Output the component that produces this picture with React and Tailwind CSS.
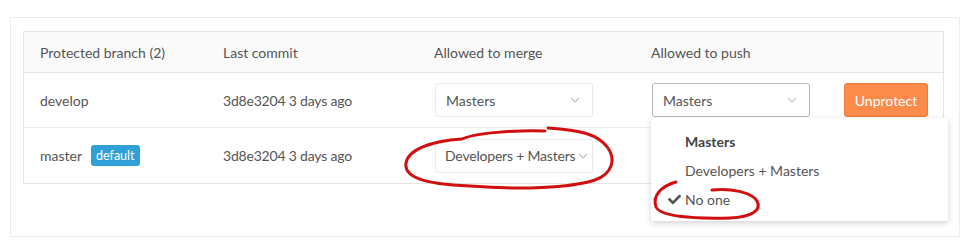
import { FaCheck } from "react-icons/fa";

function Chevron() {
  return (
    <svg width="10" height="6" viewBox="0 0 10 6" className="shrink-0">
      <path d="M1 1l4 4 4-4" fill="none" stroke="#c4c4c4" strokeWidth="1.2" />
    </svg>
  );
}

function Select({ label, focused }) {
  return (
    <div
      className={`flex items-center justify-between w-[158px] h-[34px] pl-[10px] pr-[12px] rounded-[3px] bg-white border ${
        focused ? "border-[#b8b8b8]" : "border-[#ebebeb]"
      }`}
    >
      <span className="truncate">{label}</span>
      <Chevron />
    </div>
  );
}

export default function App() {
  return (
    <div
      className="relative w-[980px] h-[240px] bg-white text-[14px] text-[#555]"
      style={{ fontFamily: '"Source Sans Pro", Lato, "Liberation Sans", sans-serif' }}
    >
      <div className="absolute left-[10px] top-[17px] w-[950px] h-[220px] border border-[#ececec] pt-[13px] pl-[12px]">
        {/* Table */}
        <div className="w-[921px] border border-[#e5e5e5]">
          {/* Header */}
          <div className="grid grid-cols-[183px_211px_217px_1fr] h-[41px] items-center bg-[#fafafa] border-b border-[#e5e5e5]">
            <div className="pl-[16px]">Protected branch (2)</div>
            <div className="pl-[16px]">Last commit</div>
            <div className="pl-[16px]">Allowed to merge</div>
            <div className="pl-[16px]">Allowed to push</div>
          </div>

          {/* develop */}
          <div className="grid grid-cols-[183px_211px_217px_1fr] h-[55px] items-center border-b border-[#eee]">
            <div className="pl-[16px]">develop</div>
            <div className="pl-[16px] tracking-[-0.2px]">3d8e3204 3 days ago</div>
            <div className="pl-[17px]">
              <Select label="Masters" />
            </div>
            <div className="pl-[17px] flex items-center gap-[34px]">
              <Select label="Masters" focused />
              <button className="h-[34px] w-[84px] rounded-[3px] bg-[#fc8a4b] border border-[#f07a38] text-white">
                Unprotect
              </button>
            </div>
          </div>

          {/* master */}
          <div className="grid grid-cols-[183px_211px_217px_1fr] h-[55px] items-center">
            <div className="pl-[16px] flex items-center gap-[9px]">
              master
              <span className="px-[5px] h-[21px] leading-[21px] rounded-[3px] bg-[#2f9fd8] text-white text-[12.5px]">
                default
              </span>
            </div>
            <div className="pl-[16px] tracking-[-0.2px]">3d8e3204 3 days ago</div>
            <div className="pl-[17px]">
              <div className="flex items-center gap-[3px] w-[158px] h-[34px] pl-[9px] rounded-[3px] bg-white border border-[#ebebeb] whitespace-nowrap overflow-hidden">
                <span className="tracking-[-0.2px]">Developers + Masters</span>
                <Chevron />
              </div>
            </div>
            <div />
          </div>
        </div>
      </div>

      {/* Dropdown menu */}
      <div className="absolute left-[651px] top-[118px] w-[297px] h-[103px] bg-white rounded-[2px] shadow-[0_2px_6px_rgba(0,0,0,0.18)] pt-[10px]">
        <div className="pl-[34px] h-[28px] leading-[28px] font-bold text-[#444]">Masters</div>
        <div className="pl-[34px] h-[29px] leading-[29px]">Developers + Masters</div>
        <div className="pl-[17px] h-[29px] leading-[29px] flex items-center gap-[4px]">
          <FaCheck className="w-[13px] h-[13px] text-[#555]" />
          No one
        </div>
      </div>

      {/* Red hand-drawn annotations */}
      <svg className="absolute inset-0 pointer-events-none" width="980" height="240">
        <path
          d="M462 139 C430 141 408 150 406 163 C404 176 420 184 470 186 C520 190 570 188 595 180 C612 174 616 160 608 148 C598 134 580 130 548 128 M545 131 C515 130 475 133 462 139"
          fill="none"
          stroke="#d10f0f"
          strokeWidth="3"
          strokeLinecap="round"
        />
        <path
          d="M676 182 C662 186 652 195 656 207 C660 216 690 219 730 218 C752 217 762 210 757 201 C752 192 730 188 712 190"
          fill="none"
          stroke="#d10f0f"
          strokeWidth="3"
          strokeLinecap="round"
        />
      </svg>
    </div>
  );
}
